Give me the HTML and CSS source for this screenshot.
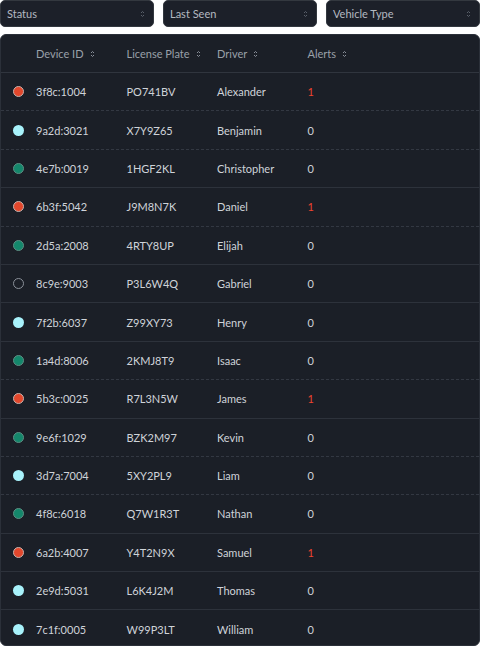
FILE: index.html
```html
<!DOCTYPE html>
<html>
<head>
<meta charset="utf-8">
<link rel="stylesheet" href="styles.css">
</head>
<body>
<div class="filters">
  <div class="select"><span>Status</span><svg class="chev" width="5" height="8" viewBox="0 0 5 8"><path d="M1 3 L2.5 1.5 L4 3 M1 5 L2.5 6.5 L4 5" fill="none" stroke="#5a606a" stroke-width="1"/></svg></div>
  <div class="select"><span>Last Seen</span><svg class="chev" width="5" height="8" viewBox="0 0 5 8"><path d="M1 3 L2.5 1.5 L4 3 M1 5 L2.5 6.5 L4 5" fill="none" stroke="#5a606a" stroke-width="1"/></svg></div>
  <div class="select"><span>Vehicle Type</span><svg class="chev" width="5" height="8" viewBox="0 0 5 8"><path d="M1 3 L2.5 1.5 L4 3 M1 5 L2.5 6.5 L4 5" fill="none" stroke="#5a606a" stroke-width="1"/></svg></div>
</div>
<div class="card">
  <div class="row head">
    <div class="c0"></div>
    <div class="col">Device ID <svg class="sort" width="5" height="8" viewBox="0 0 5 8"><path d="M1 3 L2.5 1.5 L4 3 M1 5 L2.5 6.5 L4 5" fill="none" stroke="#8a909a" stroke-width="1"/></svg></div>
    <div class="col">License Plate <svg class="sort" width="5" height="8" viewBox="0 0 5 8"><path d="M1 3 L2.5 1.5 L4 3 M1 5 L2.5 6.5 L4 5" fill="none" stroke="#8a909a" stroke-width="1"/></svg></div>
    <div class="col">Driver <svg class="sort" width="5" height="8" viewBox="0 0 5 8"><path d="M1 3 L2.5 1.5 L4 3 M1 5 L2.5 6.5 L4 5" fill="none" stroke="#8a909a" stroke-width="1"/></svg></div>
    <div class="col">Alerts <svg class="sort" width="5" height="8" viewBox="0 0 5 8"><path d="M1 3 L2.5 1.5 L4 3 M1 5 L2.5 6.5 L4 5" fill="none" stroke="#8a909a" stroke-width="1"/></svg></div>
  </div>
  <div class="row dashed"><div class="c0"><span class="dot red"></span></div><div class="col">3f8c:1004</div><div class="col">PO741BV</div><div class="col">Alexander</div><div class="col alert">1</div></div>
  <div class="row dashed"><div class="c0"><span class="dot cyan"></span></div><div class="col">9a2d:3021</div><div class="col">X7Y9Z65</div><div class="col">Benjamin</div><div class="col">0</div></div>
  <div class="row"><div class="c0"><span class="dot green"></span></div><div class="col">4e7b:0019</div><div class="col">1HGF2KL</div><div class="col">Christopher</div><div class="col">0</div></div>
  <div class="row dashed"><div class="c0"><span class="dot red"></span></div><div class="col">6b3f:5042</div><div class="col">J9M8N7K</div><div class="col">Daniel</div><div class="col alert">1</div></div>
  <div class="row"><div class="c0"><span class="dot green"></span></div><div class="col">2d5a:2008</div><div class="col">4RTY8UP</div><div class="col">Elijah</div><div class="col">0</div></div>
  <div class="row"><div class="c0"><span class="dot empty"></span></div><div class="col">8c9e:9003</div><div class="col">P3L6W4Q</div><div class="col">Gabriel</div><div class="col">0</div></div>
  <div class="row"><div class="c0"><span class="dot cyan"></span></div><div class="col">7f2b:6037</div><div class="col">Z99XY73</div><div class="col">Henry</div><div class="col">0</div></div>
  <div class="row dashed"><div class="c0"><span class="dot green"></span></div><div class="col">1a4d:8006</div><div class="col">2KMJ8T9</div><div class="col">Isaac</div><div class="col">0</div></div>
  <div class="row"><div class="c0"><span class="dot red"></span></div><div class="col">5b3c:0025</div><div class="col">R7L3N5W</div><div class="col">James</div><div class="col alert">1</div></div>
  <div class="row dashed"><div class="c0"><span class="dot green"></span></div><div class="col">9e6f:1029</div><div class="col">BZK2M97</div><div class="col">Kevin</div><div class="col">0</div></div>
  <div class="row dashed"><div class="c0"><span class="dot cyan"></span></div><div class="col">3d7a:7004</div><div class="col">5XY2PL9</div><div class="col">Liam</div><div class="col">0</div></div>
  <div class="row"><div class="c0"><span class="dot green"></span></div><div class="col">4f8c:6018</div><div class="col">Q7W1R3T</div><div class="col">Nathan</div><div class="col">0</div></div>
  <div class="row"><div class="c0"><span class="dot red"></span></div><div class="col">6a2b:4007</div><div class="col">Y4T2N9X</div><div class="col">Samuel</div><div class="col alert">1</div></div>
  <div class="row"><div class="c0"><span class="dot cyan"></span></div><div class="col">2e9d:5031</div><div class="col">L6K4J2M</div><div class="col">Thomas</div><div class="col">0</div></div>
  <div class="row last"><div class="c0"><span class="dot cyan"></span></div><div class="col">7c1f:0005</div><div class="col">W99P3LT</div><div class="col">William</div><div class="col">0</div></div>
</div>
</body>
</html>
```
FILE: styles.css
```css
html, body {
  margin: 0;
  padding: 0;
  background: #ffffff;
}
body {
  font-family: Lato, "Noto Sans", sans-serif;
  font-size: 11px;
  width: 480px;
  height: 648px;
  overflow: hidden;
}
.filters {
  display: flex;
  gap: 9px;
  height: 27px;
}
.select {
  flex: 1;
  display: flex;
  align-items: center;
  justify-content: space-between;
  background: #1c2029;
  border: 1px solid #33383f;
  border-radius: 5px;
  padding: 0 7px 0 6px;
  color: #b4b9c1;
  font-size: 11px;
}
.select .chev { margin-right: 1px; }
.card {
  margin-top: 7px;
  background: #1b1f27;
  border: 1px solid #2b3039;
  border-radius: 6px;
  height: 612px;
  box-sizing: border-box;
  overflow: hidden;
}
.row {
  display: flex;
  align-items: center;
  height: 38.4px;
  box-sizing: border-box;
  border-bottom: 1px solid #2d323b;
  color: #cfd3d9;
}
.row.dashed { border-bottom: 1px dashed #333842; }
.row.last { border-bottom: none; }
.row.head {
  height: 38px;
  color: #9aa0a9;
  border-bottom: 1px solid #30353e;
}
.c0 {
  width: 35px;
  display: flex;
  align-items: center;
  padding-left: 12px;
  box-sizing: border-box;
}
.col {
  width: 90.5px;
  display: flex;
  align-items: center;
  gap: 6px;
}
.sort { display: block; }
.dot {
  display: block;
  width: 11px;
  height: 11px;
  border-radius: 50%;
  box-sizing: border-box;
}
.dot.red { background: #e2472c; border: 1px solid #c8b3ad; }
.dot.cyan { background: #a8f2fb; }
.dot.green { background: #14876b; border: 1px solid #5e8f84; }
.dot.empty { border: 1px solid #8a9099; background: transparent; }
.alert { color: #f0442f; }
```
